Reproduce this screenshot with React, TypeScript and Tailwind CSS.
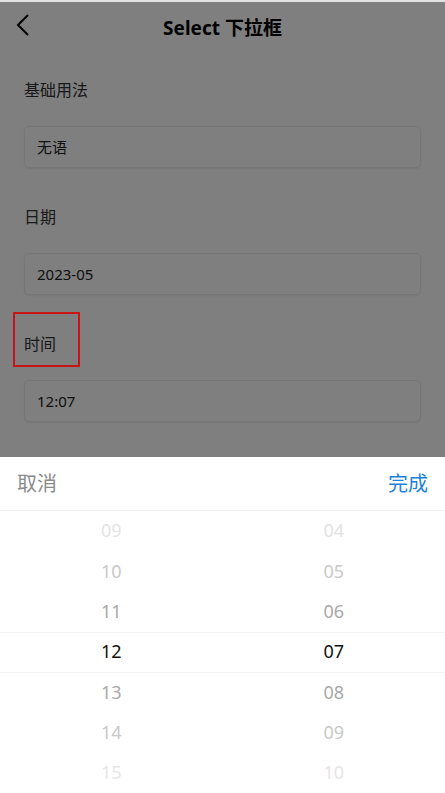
import React from 'react';

const hours = ['09', '10', '11', '12', '13', '14', '15'];
const minutes = ['04', '05', '06', '07', '08', '09', '10'];
const shades = ['text-[#e3e3e3]', 'text-[#c9c9c9]', 'text-[#a9a9a9]', 'text-[#111111]', 'text-[#a9a9a9]', 'text-[#c9c9c9]', 'text-[#e6e6e6]'];

const Field: React.FC<{ label: string; value: string; marked?: boolean }> = ({ label, value, marked }) => (
  <div className="flex flex-col">
    <div className="relative h-[72px] flex items-center">
      <span className="text-[16px] text-[#333]">{label}</span>
      {/* annotation box, drawn above the mask */}
      {marked && <div className="absolute z-20 left-[-11px] top-[4px] w-[67px] h-[55px] border-2 border-[#c81414]" />}
    </div>
    <div className="h-[42px] rounded-[5px] border border-[#ececec] shadow-[0_1px_2px_rgba(0,0,0,0.08)] bg-white flex items-center px-[12px]">
      <span className="text-[15px] text-[#222]">{value}</span>
    </div>
  </div>
);

const Column: React.FC<{ items: string[] }> = ({ items }) => (
  <div className="flex-1 flex flex-col items-center">
    {items.map((v, i) => (
      <div key={i} className={`h-[40.33px] flex items-center text-[18px] ${shades[i]}`}>
        {v}
      </div>
    ))}
  </div>
);

export default function App() {
  return (
    <div className="relative w-[445px] h-[793px] overflow-hidden bg-white" style={{ fontFamily: '"Noto Sans", "Noto Sans CJK SC", sans-serif' }}>
      {/* page */}
      <div className="h-[2px] bg-[#e2e2e2]" />
      <div className="relative h-[52px] flex items-center justify-center">
        <svg className="absolute left-[15px] top-[11px]" width="16" height="24" viewBox="0 0 16 24" fill="none">
          <path d="M13 2 L3 12 L13 22" stroke="#000" strokeWidth="2" />
        </svg>
        <h1 className="text-[19px] font-bold text-black">Select 下拉框</h1>
      </div>
      <div className="flex flex-col gap-[13px] px-[24px]">
        <Field label="基础用法" value="无语" />
        <Field label="日期" value="2023-05" />
        <Field label="时间" value="12:07" marked />
      </div>

      {/* mask */}
      <div className="absolute z-10 left-0 right-0 top-[2px] bottom-0 bg-black/50" />

      {/* picker */}
      <div className="absolute z-30 left-0 right-0 bottom-0 h-[336px] bg-white flex flex-col">
        <div className="h-[54px] pt-[2px] flex items-center justify-between px-[17px] border-b border-[#f0f0f0]">
          <span className="text-[20px] text-[#8a8a8a]">取消</span>
          <span className="text-[20px] text-[#1a82d9]">完成</span>
        </div>
        <div className="relative flex">
          <div className="absolute left-0 right-0 top-[121px] h-[41px] border-y border-[#f2f2f2]" />
          <Column items={hours} />
          <Column items={minutes} />
        </div>
      </div>
    </div>
  );
}
